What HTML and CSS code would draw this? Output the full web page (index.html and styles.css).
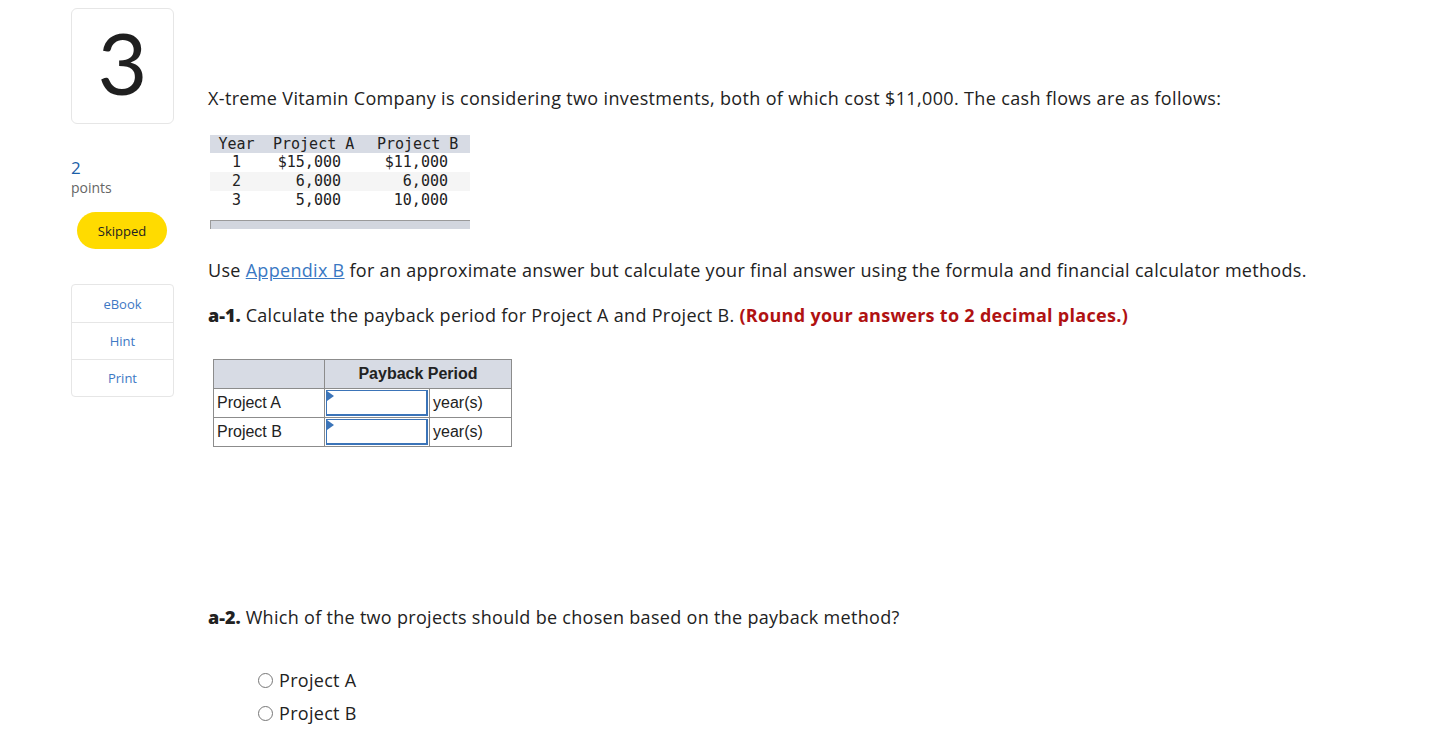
FILE: index.html
```html
<!DOCTYPE html>
<html>
<head>
<meta charset="utf-8">
<link rel="stylesheet" href="styles.css">
</head>
<body>
<div class="page">
  <aside class="side">
    <div class="qnum">3</div>
    <div class="points"><div class="pval">2</div><div class="plabel">points</div></div>
    <div class="skipped">Skipped</div>
    <div class="tools">
      <div class="tool">eBook</div>
      <div class="tool">Hint</div>
      <div class="tool">Print</div>
    </div>
  </aside>
  <main class="main">
    <p class="intro">X-treme Vitamin Company is considering two investments, both of which cost $11,000. The cash flows are as follows:</p>
    <div class="cf">
      <table class="cft">
        <colgroup><col class="w1"><col class="w2"><col class="w3"></colgroup>
        <thead><tr><th class="c1">Year</th><th class="c2">Project A</th><th class="c3">Project B</th></tr></thead>
        <tbody>
          <tr><td class="c1">1</td><td class="c2">$15,000</td><td class="c3">$11,000</td></tr>
          <tr class="alt"><td class="c1">2</td><td class="c2">6,000</td><td class="c3">6,000</td></tr>
          <tr><td class="c1">3</td><td class="c2">5,000</td><td class="c3">10,000</td></tr>
        </tbody>
      </table>
      <div class="cfbar"></div>
    </div>
    <p class="use">Use <a href="#">Appendix B</a> for an approximate answer but calculate your final answer using the formula and financial calculator methods.</p>
    <p class="q"><b class="lbl">a-1.</b> Calculate the payback period for Project A and Project B. <b class="red">(Round your answers to 2 decimal places.)</b></p>
    <table class="pp">
      <tr class="hd"><th></th><th colspan="2">Payback Period</th></tr>
      <tr><td class="nm">Project A</td><td class="in"><div class="box"><span class="tri"></span></div></td><td class="un">year(s)</td></tr>
      <tr><td class="nm">Project B</td><td class="in"><div class="box"><span class="tri"></span></div></td><td class="un">year(s)</td></tr>
    </table>
    <p class="q q2"><b class="lbl">a-2.</b> Which of the two projects should be chosen based on the payback method?</p>
    <div class="opts">
      <label class="opt"><span class="radio"></span>Project A</label>
      <label class="opt"><span class="radio"></span>Project B</label>
    </div>
  </main>
</div>
</body>
</html>
```
FILE: styles.css
```css
html, body { margin: 0; padding: 0; background: #fff; }
body { font-family: "Open Sans", Lato, sans-serif; color: #222; }
.page { display: flex; padding: 8px 0 0 71px; }
.side { width: 103px; display: flex; flex-direction: column; }
.qnum {
  width: 103px; height: 116px; border: 1px solid #e6e6e6; border-radius: 6px;
  display: flex; align-items: center; justify-content: center; box-sizing: border-box;
  font-family: Lato, sans-serif; font-size: 86px; font-weight: 400; color: #1f1f1f; line-height: 1; padding-bottom: 8px;
}
.points { margin-top: 34px; }
.pval { font-size: 17px; color: #1c5fa8; line-height: 20px; }
.plabel { font-size: 14px; color: #666; line-height: 20px; }
.skipped {
  margin: 14px 0 0 6px; width: 90px; height: 37px; border-radius: 19px; background: #ffdb00;
  display: flex; align-items: center; justify-content: center; font-size: 13px; color: #222;
}
.tools { margin-top: 35px; border: 1px solid #e6e6e6; border-radius: 4px; }
.tool { height: 36px; display: flex; align-items: center; justify-content: center; font-size: 13px; color: #3d78c4; border-top: 1px solid #e6e6e6; }
.tool:first-child { border-top: none; height: 37px; }
.main { margin-left: 34px; flex: 1; }
.intro { margin: 79px 0 0 0; font-size: 18px; line-height: 22px; letter-spacing: 0.35px; }
.cf { margin: 26px 0 0 2px; width: 260px; }
.cft { border-collapse: collapse; table-layout: fixed; font-family: "DejaVu Sans Mono", "Liberation Mono", monospace; font-size: 15px; color: #222; width: 260px; }
.cft col.w1 { width: 53px; }
.cft col.w2 { width: 97px; }
.cft col.w3 { width: 110px; }
.cft th { background: #d7dbe4; font-weight: normal; height: 18px; padding: 0; line-height: 18px; white-space: nowrap; }
.cft td { height: 19px; padding: 0; line-height: 19px; white-space: nowrap; }
.cft tr.alt td { background: #f5f5f5; }
.cft .c1 { text-align: center; }
.cft td.c2 { text-align: right; padding-right: 19px; }
.cft td.c3 { text-align: right; padding-right: 22px; }
.cft th.c2 { text-align: left; padding-left: 10px; }
.cft th.c3 { text-align: left; padding-left: 17px; }
.cfbar { margin-top: 10px; height: 8px; background: #d2d6de; border-top: 1px solid #9a9a9a; border-left: 1px solid #9a9a9a; }
.use { margin: 30px 0 0 0; font-size: 18px; line-height: 22px; letter-spacing: 0.3px; }
.use a { color: #3a78c3; text-decoration: underline; }
.q { margin: 23px 0 0 0; font-size: 18px; line-height: 22px; letter-spacing: 0.3px; }
.lbl { font-weight: 800; letter-spacing: 0; }
.red { color: #b01212; font-weight: 700; letter-spacing: 0.3px; }
.pp { margin: 33px 0 0 5px; border-collapse: collapse; font-family: "Liberation Sans", Arial, sans-serif; font-size: 16px; color: #222; letter-spacing: 0; }
.pp th, .pp td { border: 1px solid #8c8c8c; padding: 0; height: 28px; }
.pp tr.hd th { background: #d7dbe4; font-weight: bold; height: 28px; }
.pp td.nm { width: 107px; padding-left: 3px; }
.pp td.in { width: 104px; padding: 0; }
.pp td.un { width: 78px; padding-left: 3px; }
.box { position: relative; margin: 0 1px; height: 26px; border: 2px solid #3b74b8; border-top-width: 1px; border-left-width: 1px; box-sizing: border-box; background: #fff; }
.tri { position: absolute; left: 0; top: 0; width: 0; height: 0; border-top: 5px solid transparent; border-bottom: 5px solid transparent; border-left: 7px solid #3b74b8; }
.q2 { margin-top: 159px; }
.opts { margin: 41px 0 0 50px; display: flex; flex-direction: column; gap: 11px; }
.opt { display: flex; align-items: center; font-size: 18px; line-height: 22px; color: #222; letter-spacing: 0.3px; }
.radio { width: 15px; height: 15px; border: 1.5px solid #777; border-radius: 50%; margin-right: 6px; box-sizing: border-box; }
```
